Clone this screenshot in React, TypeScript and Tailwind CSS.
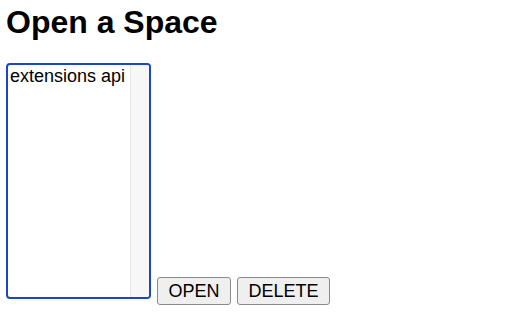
export default function App() {
  return (
    <div className="w-[512px] h-[320px] bg-white pl-[6px] pt-[4px] font-['Liberation_Sans',Arial,sans-serif] text-black">
      <h1 className="text-[32px] leading-[36px] font-bold">Open a Space</h1>

      <div className="mt-[23px] flex items-end gap-[6px]">
        <div className="mb-[6px] flex w-[145px] h-[236px] rounded-[4px] border-2 border-[#1a46c8] bg-white overflow-hidden">
          <div className="flex-1 min-w-0 pl-[2px] pt-[1px]">
            <div className="text-[18px] leading-[21px] whitespace-nowrap">extensions api</div>
          </div>
          <div className="w-[19px] h-full border-l border-[#e6e6e6] bg-[#f7f7f7]" />
        </div>

        <button className="h-[28px] px-[10.5px] rounded-[3px] border border-[#8a8a8a] bg-[#efefef] text-[18px] leading-[21px]">
          OPEN
        </button>
        <button className="h-[28px] px-[10.5px] rounded-[3px] border border-[#8a8a8a] bg-[#efefef] text-[18px] leading-[21px]">
          DELETE
        </button>
      </div>
    </div>
  );
}
